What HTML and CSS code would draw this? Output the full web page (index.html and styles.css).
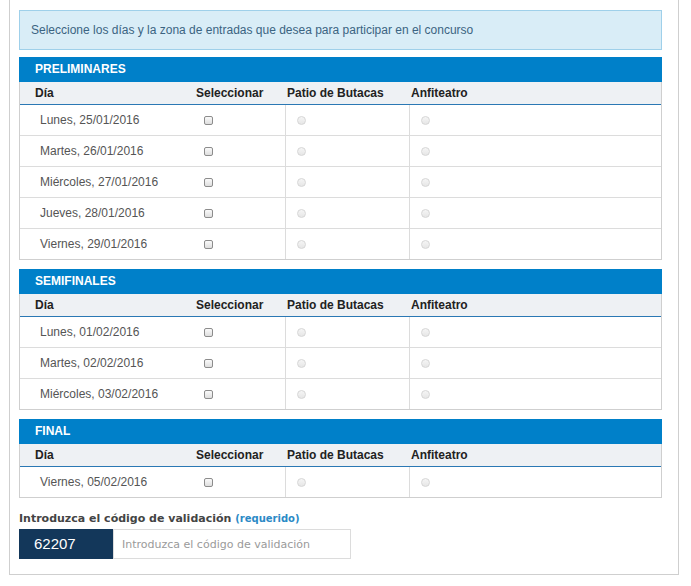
FILE: index.html
```html
<!DOCTYPE html>
<html lang="es">
<head>
<meta charset="utf-8">
<title>Concurso</title>
<link rel="stylesheet" href="styles.css">
</head>
<body>
<div class="panel">
  <div class="info">Seleccione los días y la zona de entradas que desea para participar en el concurso</div>

  <section class="fase">
    <h3 class="fase-title">PRELIMINARES</h3>
    <table class="dias">
      <colgroup><col class="c1"><col class="c2"><col class="c3"><col class="c4"></colgroup>
      <thead><tr><th class="h1">Día</th><th>Seleccionar</th><th>Patio de Butacas</th><th>Anfiteatro</th></tr></thead>
      <tbody>
        <tr><td class="dia">Lunes, 25/01/2016</td><td class="sel"><input type="checkbox" class="chk"></td><td class="zona"><input type="radio" class="rad" disabled></td><td class="zona"><input type="radio" class="rad" disabled></td></tr>
        <tr><td class="dia">Martes, 26/01/2016</td><td class="sel"><input type="checkbox" class="chk"></td><td class="zona"><input type="radio" class="rad" disabled></td><td class="zona"><input type="radio" class="rad" disabled></td></tr>
        <tr><td class="dia">Miércoles, 27/01/2016</td><td class="sel"><input type="checkbox" class="chk"></td><td class="zona"><input type="radio" class="rad" disabled></td><td class="zona"><input type="radio" class="rad" disabled></td></tr>
        <tr><td class="dia">Jueves, 28/01/2016</td><td class="sel"><input type="checkbox" class="chk"></td><td class="zona"><input type="radio" class="rad" disabled></td><td class="zona"><input type="radio" class="rad" disabled></td></tr>
        <tr><td class="dia">Viernes, 29/01/2016</td><td class="sel"><input type="checkbox" class="chk"></td><td class="zona"><input type="radio" class="rad" disabled></td><td class="zona"><input type="radio" class="rad" disabled></td></tr>
      </tbody>
    </table>
  </section>

  <section class="fase">
    <h3 class="fase-title">SEMIFINALES</h3>
    <table class="dias">
      <colgroup><col class="c1"><col class="c2"><col class="c3"><col class="c4"></colgroup>
      <thead><tr><th class="h1">Día</th><th>Seleccionar</th><th>Patio de Butacas</th><th>Anfiteatro</th></tr></thead>
      <tbody>
        <tr><td class="dia">Lunes, 01/02/2016</td><td class="sel"><input type="checkbox" class="chk"></td><td class="zona"><input type="radio" class="rad" disabled></td><td class="zona"><input type="radio" class="rad" disabled></td></tr>
        <tr><td class="dia">Martes, 02/02/2016</td><td class="sel"><input type="checkbox" class="chk"></td><td class="zona"><input type="radio" class="rad" disabled></td><td class="zona"><input type="radio" class="rad" disabled></td></tr>
        <tr><td class="dia">Miércoles, 03/02/2016</td><td class="sel"><input type="checkbox" class="chk"></td><td class="zona"><input type="radio" class="rad" disabled></td><td class="zona"><input type="radio" class="rad" disabled></td></tr>
      </tbody>
    </table>
  </section>

  <section class="fase">
    <h3 class="fase-title">FINAL</h3>
    <table class="dias">
      <colgroup><col class="c1"><col class="c2"><col class="c3"><col class="c4"></colgroup>
      <thead><tr><th class="h1">Día</th><th>Seleccionar</th><th>Patio de Butacas</th><th>Anfiteatro</th></tr></thead>
      <tbody>
        <tr><td class="dia">Viernes, 05/02/2016</td><td class="sel"><input type="checkbox" class="chk"></td><td class="zona"><input type="radio" class="rad" disabled></td><td class="zona"><input type="radio" class="rad" disabled></td></tr>
      </tbody>
    </table>
  </section>

  <div class="validacion">
    <label class="val-label" for="codigo">Introduzca el código de validación <span class="req">(requerido)</span></label>
    <div class="val-row">
      <div class="code">62207</div>
      <input id="codigo" class="val-input" type="text" placeholder="Introduzca el código de validación">
    </div>
  </div>
</div>
</body>
</html>
```
FILE: styles.css
```css
html, body {
  margin: 0;
  padding: 0;
  background: #fff;
}
body {
  font-family: "Liberation Sans", Arial, sans-serif;
  font-size: 12px;
  color: #555;
}
.panel {
  margin-left: 9px;
  width: 670px;
  box-sizing: border-box;
  border: 1px solid #cfcfcf;
  border-top: none;
  padding: 10px 16px 15px 9px;
}
.info {
  box-sizing: border-box;
  height: 40px;
  background: #d9edf7;
  border: 1px solid #9fd0ea;
  color: #3b6482;
  padding: 0 11px;
  line-height: 38px;
  font-size: 12px;
  margin-bottom: 7px;
}
.fase {
  margin-bottom: 9px;
}
.fase-title {
  margin: 0;
  height: 25px;
  line-height: 25px;
  background: #0080c9;
  color: #fff;
  font-size: 12px;
  font-weight: bold;
  padding-left: 16px;
}
.dias {
  width: 100%;
  table-layout: fixed;
  border-collapse: separate;
  border-spacing: 0;
  border: 1px solid #cfcfcf;
  border-top: none;
}
.c1 { width: 174px; }
.c2 { width: 91px; }
.c3 { width: 124px; }
.c4 { width: auto; }
.dias th {
  background: #eef1f4;
  color: #222;
  font-weight: bold;
  font-size: 12px;
  text-align: left;
  height: 22px;
  padding: 0 0 0 2px;
  border-bottom: 1px solid #2a78b4;
  line-height: 22px;
}
.dias th.h1 { padding-left: 15px; }
.dias td {
  height: 30px;
  padding: 0;
  border-bottom: 1px solid #dcdcdc;
  vertical-align: middle;
}
.dias tbody tr:last-child td { border-bottom: none; }
.dias td.dia { padding-left: 20px; color: #555; }
.dias td.sel { padding-left: 10px; }
.dias td.zona { padding-left: 10px; border-left: 1px solid #dcdcdc; }
.chk, .rad {
  -webkit-appearance: none;
  appearance: none;
  display: block;
  margin: 0;
  box-sizing: border-box;
  width: 9px;
  height: 9px;
}
.chk {
  border: 1px solid #8c8c8c;
  border-radius: 2px;
  background: linear-gradient(#fafafa, #dedede);
}
.rad {
  margin-left: 1px;
  border: 1px solid #d6d6d6;
  border-radius: 50%;
  background: linear-gradient(#f5f5f5, #e6e6e6);
}
.validacion {
  padding-top: 5px;
}
.val-label {
  display: block;
  font-family: "DejaVu Sans", Verdana, sans-serif;
  font-weight: bold;
  font-size: 11px;
  color: #444;
  line-height: 14px;
  margin-bottom: 3px;
}
.req {
  color: #2b8ac6;
  font-size: 10px;
}
.val-row {
  display: flex;
}
.code {
  width: 94px;
  height: 30px;
  box-sizing: border-box;
  background: #13375a;
  color: #fff;
  font-family: "Liberation Sans", Arial, sans-serif;
  font-size: 15px;
  line-height: 30px;
  padding-left: 15px;
}
.val-input {
  width: 238px;
  height: 30px;
  box-sizing: border-box;
  border: 1px solid #dcdcdc;
  margin: 0;
  padding: 0 8px;
  font-family: "DejaVu Sans", Verdana, sans-serif;
  font-size: 11px;
  color: #555;
  outline: none;
}
.val-input::placeholder {
  color: #9a9a9a;
}
```
